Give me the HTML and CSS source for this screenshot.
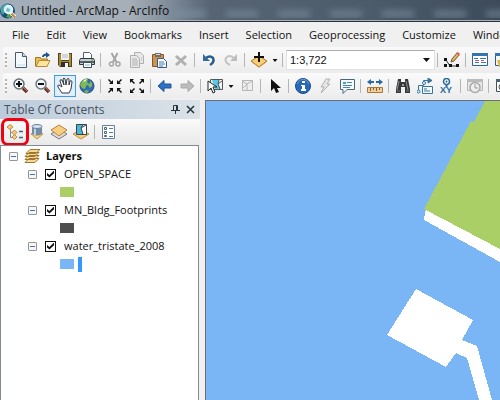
FILE: index.html
```html
<!DOCTYPE html>
<html lang="en">
<head>
<meta charset="utf-8">
<title>Untitled - ArcMap - ArcInfo</title>
<link rel="stylesheet" href="styles.css">
</head>
<body>
<div class="app">
  <header class="titlebar">
    <svg class="icon" viewBox="0 0 16 16"><circle cx="7.500" cy="8" r="7.500" fill="#174d78"/><path d="M1 5Q4 0 9 1L5 4 6 7 3 12Q0 9 1 5z" fill="#4ba5a8"/><path d="M9 9l4 1-3 5-4-1z" fill="#52a350"/><circle cx="8.500" cy="6.500" r="4" fill="#c9edf8" stroke="#eff8fa" stroke-width="1.500"/><path d="M7 5l3 1-1 3-3-1z" fill="#68b9c9"/><path d="M11 10l4 4" stroke="#fff" stroke-width="3.500"/><path d="M11.500 10.500l3.500 4" stroke="#c78639" stroke-width="2"/></svg>
    <h1 class="title">Untitled - ArcMap - ArcInfo</h1>
    <div class="glass" aria-hidden="true"><i></i><i></i><i></i><i></i><i></i><i></i><i></i><i></i></div>
  </header>
  <nav class="menubar">
    <button>File</button><button>Edit</button><button>View</button><button>Bookmarks</button><button>Insert</button><button>Selection</button><button>Geoprocessing</button><button>Customize</button><button>Windows</button>
  </nav>

  <div class="toolbar" role="toolbar" aria-label="Standard">
    <span class="grip"></span>
    <button class="tool" aria-label="New"><svg class="icon" viewBox="0 0 16 16"><path d="M2.500.5h7l4 4v11h-11z" fill="#f4f9fd" stroke="#465b70"/><path d="M9.500.5v4h4" fill="#cbdcec" stroke="#465b70"/><path d="M4 12h8v2H4z" fill="#dce9f5"/></svg></button>
    <button class="tool" aria-label="Open"><svg class="icon" viewBox="0 0 16 16"><path d="M.5 14V5.500h5l1 1.500h6v7z" fill="#e9bd55" stroke="#a3772b"/><path d="M1 14.500L4 8.500h11l-3 6z" fill="#ffe49b" stroke="#b48a37"/><path d="M8 5Q8 2.500 12 2.500" fill="none" stroke="#1f5688" stroke-width="2"/><path d="M11 0l4 3-4 3z" fill="#1f5688"/></svg></button>
    <button class="tool" aria-label="Save"><svg class="icon" viewBox="0 0 16 16"><path d="M1 1h14v14H3l-2-2z" fill="#51451f"/><path d="M2 2h2v7h8V2h2v12H2z" fill="#a98b3c"/><path d="M4 1h8v7H4z" fill="#edf1f4"/><path d="M5 3h6M5 5h6" stroke="#b7bcc1"/><path d="M4 10h8v5H4z" fill="#30302c"/><path d="M8 11h3v4H8z" fill="#f4f4f0"/></svg></button>
    <button class="tool" aria-label="Print"><svg class="icon" viewBox="0 0 16 16"><path d="M4.500 6V.5h6l2 2V6" fill="#fff" stroke="#4d6478"/><path d="M1.500 6.500h13l1 2v4H.500v-4z" fill="#c7cbce" stroke="#303840"/><path d="M1 9h14v2H1z" fill="#52606a"/><path d="M12 7h2v2h-2z" fill="#7dc949"/><path d="M4.500 10.500h8v5h-8z" fill="#fff" stroke="#394d5f"/><path d="M6 13h5" stroke="#8ba8bf"/></svg></button>
    <span class="sep"></span>
    <button class="tool" aria-label="Cut"><svg class="icon" viewBox="0 0 16 16" fill="none" stroke="#a6a6a6" stroke-width="2"><path d="M4.500 1l5 9M10.500 1L6 10"/><circle cx="4.500" cy="12" r="2" stroke-width="1.500"/><circle cx="11" cy="12" r="2" stroke-width="1.500"/></svg></button>
    <button class="tool" aria-label="Copy"><svg class="icon" viewBox="0 0 16 16" fill="#e9e9e9" stroke="#b0b0b0"><path d="M5.500.5h6l3 3v8h-9z"/><path d="M1.500 3.500h6l3 3v9h-9z"/><path d="M3 7h5M3 9h6M3 11h6M3 13h6M12 6h1M12 8h1"/></svg></button>
    <button class="tool" aria-label="Paste"><svg class="icon" viewBox="0 0 16 16"><path d="M1.500 2.500h11v12h-11z" fill="#ce9350" stroke="#885526"/><path d="M4 1h6v4H4z" fill="#6e6e6e"/><path d="M5 2h4v1H5z" fill="#ddd"/><path d="M6.500 6.500h6l3 3v6h-9z" fill="#f6faff" stroke="#335d89"/><path d="M8 10h5M8 12h6M8 14h4" stroke="#507ba6"/></svg></button>
    <button class="tool" aria-label="Delete"><svg class="icon" viewBox="0 0 16 16"><path d="M3 4l10 9M13 4L3 13" stroke="#b0b0b0" stroke-width="3"/></svg></button>
    <span class="sep"></span>
    <button class="tool" aria-label="Undo"><svg class="icon" viewBox="0 0 16 16"><path d="M5 6Q9 3 12 6 14 10 9 13" fill="none" stroke="#285c8c" stroke-width="2.500"/><path d="M2 2v7h7z" fill="#326c9e"/></svg></button>
    <button class="tool" aria-label="Redo"><svg class="icon" viewBox="0 0 16 16"><path d="M11 6Q6 2 3 6 1 10 7 13" fill="none" stroke="#c4c4c4" stroke-width="2"/><path d="M14 2v7H7z" fill="#bdbdbd"/></svg></button>
    <span class="sep"></span>
    <button class="tool" aria-label="Add Data"><svg class="icon" viewBox="0 0 16 16"><path d="M0 9l8-5 8 5-8 6z" fill="#f7cd78" stroke="#af792b"/><path d="M1 10l7 5 7-5" fill="none" stroke="#c98e36"/><path d="M8 0v10M3 5h10" stroke="#111" stroke-width="2"/></svg></button>
    <button class="drop" aria-label="Add Data options"></button>
    <span class="sep"></span>
    <div class="scale"><select aria-label="Map scale"><option>1:3,722</option></select></div>
    <span class="sep"></span>
    <button class="tool" aria-label="Editor"><svg class="icon" viewBox="0 0 16 16"><path d="M2 8l4 6h8" fill="none" stroke="#333"/><path d="M0 6h3v3H0zM0 12h3v3H0zM5 12h3v3H5zM12 12h3v3h-3z" fill="#111"/><path d="M7 10l1-3 5-6 2 2-5 6z" fill="#edb75d" stroke="#6b563a"/><path d="M12 1l2-1 2 2-1 2z" fill="#dd6155"/></svg></button>
    <span class="sep"></span>
    <button class="tool" aria-label="Table Of Contents window"><svg class="icon" viewBox="0 0 16 16"><path d="M.5 1.500h15v12H.5z" fill="#fff" stroke="#2b6599"/><path d="M0 1h16v3H0z" fill="#3475ae"/><path d="M2 6.500h4M8 6.500h6M3 10.500h4M9 10.500h5" stroke="#3376b3"/><path d="M3 8.500h4M9 8.500h3" stroke="#d35151"/></svg></button>
    <button class="tool" aria-label="Catalog window"><svg class="icon" viewBox="0 0 16 16"><path d="M1.500 1.500h14v12h-14z" fill="#f3f7fa" stroke="#285d8c"/><path d="M1 1h15v3H1z" fill="#3475ae"/><path d="M3 8h12v7H5z" fill="#dfb842"/></svg></button>
  </div>

  <div class="toolbar" role="toolbar" aria-label="Tools">
    <span class="grip"></span>
    <button class="tool" aria-label="Zoom In"><svg class="icon" viewBox="0 0 16 16"><path d="M10 10l4 4" stroke="#6b3529" stroke-width="3.500"/><path d="M11 10l4 4" stroke="#b87962"/><circle cx="6" cy="6" r="5" fill="#f1f5f8" stroke="#64707a" stroke-width="1.500"/><path d="M6 3v6M3 6h6" stroke="#111" stroke-width="2"/></svg></button>
    <button class="tool" aria-label="Zoom Out"><svg class="icon" viewBox="0 0 16 16"><path d="M10 10l4 4" stroke="#6b3529" stroke-width="3.500"/><path d="M11 10l4 4" stroke="#b87962"/><circle cx="6" cy="6" r="5" fill="#f1f5f8" stroke="#707b84" stroke-width="1.500"/><path d="M3 6h6" stroke="#111" stroke-width="2"/></svg></button>
    <button class="tool active" aria-label="Pan" aria-pressed="true"><svg class="icon" viewBox="0 0 16 16"><path d="M5 15L1 9q-1-2 1-2l3 2-2-6q0-2 2-1l2 5-1-6q1-2 2 0l1 6 1-6q2-1 2 0v6l1-4q2-1 2 1l-1 7-2 4z" fill="#fff" stroke="#353b42"/></svg></button>
    <button class="tool" aria-label="Full Extent"><svg class="icon" viewBox="0 0 16 16"><circle cx="8" cy="8" r="7" fill="#2f6fb1" stroke="#244f7a"/><path d="M3 3q3-3 6-2L8 4l2 2-3 2-1 3-3-1-2-3zM11 3l2 2v3l-2 2-2-3 2-2zM7 12l3 1-2 2-3-1z" fill="#82b957"/><path d="M4 3q2-2 4-2L6 4z" fill="#d9f0c2"/></svg></button>
    <span class="sep"></span>
    <button class="tool" aria-label="Fixed Zoom In"><svg class="icon" viewBox="0 0 16 16" fill="#111"><path d="M6 2v4H2l1.500-1.500L1 2l1-1 2.500 2.500zM10 2v4h4l-1.500-1.500L15 2l-1-1-2.500 2.500zM6 14v-4H2l1.500 1.500L1 14l1 1 2.500-2.500zM10 14v-4h4l-1.500 1.500L15 14l-1 1-2.500-2.500z"/></svg></button>
    <button class="tool" aria-label="Fixed Zoom Out"><svg class="icon" viewBox="0 0 16 16" fill="#111"><path d="M1 5V1h4L3.500 2.500 6 5 5 6 2.500 3.500zM15 5V1h-4l1.500 1.500L10 5l1 1 2.500-2.500zM1 11v4h4l-1.500-1.500L6 11l-1-1-2.500 2.500zM15 11v4h-4l1.500-1.500L10 11l1-1 2.500 2.500z"/></svg></button>
    <span class="sep"></span>
    <button class="tool" aria-label="Previous Extent"><svg class="icon" viewBox="0 0 16 16"><path d="M1 8l6-5.500V6h7v4H7v3.500z" fill="#2d72c7" stroke="#225494"/></svg></button>
    <button class="tool" aria-label="Next Extent"><svg class="icon" viewBox="0 0 16 16"><path d="M15 8L9 2.500V6H2v4h7v3.500z" fill="#bcbcbc" stroke="#aaa"/></svg></button>
    <span class="sep"></span>
    <button class="tool" aria-label="Select Features"><svg class="icon" viewBox="0 0 16 16"><path d="M3.500 1.500h12v10h-12z" fill="#f5f5f5" stroke="#555"/><path d="M5 2h7l-1 4 2 5H8z" fill="#54cce7"/><path d="M12 2l-1 4 4-3M11 6l2 5" fill="none" stroke="#555"/><path d="M1 3v10l3-3 2 5 2-1-2-5h4z" fill="#fff" stroke="#222"/></svg></button>
    <button class="drop" aria-label="Selection options"></button>
    <button class="tool" aria-label="Clear Selection"><svg class="icon" viewBox="0 0 16 16" fill="none" stroke="#b5b5b5"><path d="M3.500 2.500h10v10h-10z" fill="#eee"/><path d="M3 3l5 3 5-3M8 6v6M4 10l4-4"/></svg></button>
    <span class="sep"></span>
    <button class="tool" aria-label="Select Elements"><svg class="icon" viewBox="0 0 16 16"><path d="M4 1v12l3-3 2 5 3-1-2-4h4z" fill="#111"/></svg></button>
    <span class="sep"></span>
    <button class="tool" aria-label="Identify"><svg class="icon" viewBox="0 0 16 16"><circle cx="8" cy="8" r="7.500" fill="#2868b7" stroke="#18488a"/><path d="M2 6q2-5 6-5t6 5" fill="none" stroke="#6399d3"/><path d="M7 3h3v2H7zM6 7h4v4h1v2H6v-2h1V8H6z" fill="#fff"/></svg></button>
    <button class="tool" aria-label="Hyperlink"><svg class="icon" viewBox="0 0 16 16"><path d="M9 1h4L10 6h3l-9 9 3-6H4z" fill="#e5e5e5" stroke="#b1b1b1"/></svg></button>
    <button class="tool" aria-label="HTML Popup"><svg class="icon" viewBox="0 0 16 16"><path d="M1.500 1.500h14v10H8l-4 4v-4H1.500z" fill="#f4faff" stroke="#48677b"/><path d="M4 4h3v2H4z" fill="#4d99bf"/><path d="M8 4.500h5M4 7.500h9M4 9.500h7" stroke="#4787ad"/></svg></button>
    <span class="sep"></span>
    <button class="tool" aria-label="Measure"><svg class="icon" viewBox="0 0 16 16"><path d="M0 4l4-3v2h3v2H4v2zM16 4l-4-3v2H9v2h3v2z" fill="#286ba8"/><path d="M.5 9.500h15v5H.5z" fill="#efd098" stroke="#aa7540"/><path d="M3.500 10v3M6.500 10v2M9.500 10v3M12.500 10v2" stroke="#8c5a2b"/></svg></button>
    <span class="sep"></span>
    <button class="tool" aria-label="Find"><svg class="icon" viewBox="0 0 16 16"><path d="M3 1h3v3h4V1h3l2 10v4h-5V9H6v6H1v-4z" fill="#34383a"/><path d="M4 3L2 12M11 3l2 9" stroke="#8e9495"/><path d="M7 6h2v2H7z" fill="#999"/><path d="M2 13h3M11 13h3" stroke="#777"/></svg></button>
    <button class="tool" aria-label="Find Route"><svg class="icon" viewBox="0 0 16 16" fill="none" stroke="#35759e"><path d="M1.500 12V7.500h5v-5H12"/><path d="M11 0l4 2.500L11 5z" fill="#35759e"/><circle cx="1.500" cy="13.500" r="1.500" fill="#d3eaf5"/><circle cx="7" cy="5" r="1.500" fill="#fff"/><path d="M5.500 8.500h10v7h-10z" fill="#f5faff"/><path d="M7 11h3M7 13h6"/></svg></button>
    <button class="tool" aria-label="Go To XY"><svg class="icon" viewBox="0 0 16 16"><circle cx="7.500" cy="3.500" r="3" fill="#fff" stroke="#286a9f" stroke-width="1.500"/><path d="M7 3h1v1H7zM7 7h1v2H7z" fill="#286a9f" stroke="#286a9f"/><text class="xy" x="1" y="15">XY</text></svg></button>
    <span class="sep"></span>
    <button class="tool" aria-label="Time Slider"><svg class="icon" viewBox="0 0 16 16"><path d="M.5 1.500h15v11H.5z" fill="#e7e7e7" stroke="#b7b7b7"/><path d="M0 1h16v3H0z" fill="#bbb"/><circle cx="8" cy="9.500" r="5" fill="#eee" stroke="#aaa" stroke-width="1.500"/><path d="M8 6v4h3" fill="none" stroke="#999"/></svg></button>
    <span class="sep"></span>
    <button class="tool" aria-label="Viewer Window"><svg class="icon" viewBox="0 0 16 16"><path d="M1.500 1.500h14v12h-14z" fill="#fff" stroke="#444f58"/><path d="M1 1h15v3H1z" fill="#4f6170"/><circle cx="7" cy="9" r="3" fill="#ddd" stroke="#555"/></svg></button>
  </div>

  <main class="workspace">
    <aside class="toc">
      <div class="toc-head">
        <h2>Table Of Contents</h2>
        <button class="mini" aria-label="Auto hide"><svg viewBox="0 0 9 9" fill="none" stroke="#26323e"><path d="M2.500 5V.5h4V5M5.500 1v4M0 5.500h9M4.500 6v3"/></svg></button>
        <button class="mini" aria-label="Close"><svg viewBox="0 0 9 9"><path d="M1 1l7 7M8 1L1 8" stroke="#26323e" stroke-width="1.500"/></svg></button>
      </div>
      <div class="toc-tools">
        <button class="tool marked" aria-label="List By Drawing Order"><svg class="icon" viewBox="0 0 16 16"><path d="M3.500 5v8.500H6M3.500 8.500H6" fill="none" stroke="#888"/><g fill="#f2cc84" stroke="#c19042"><path d="M0 3l3-2.500L6 3 3 5.500zM5 8.500L7.500 6 10 8.500 7.500 11zM5 13l2.500-2.500L10 13l-2.500 2.500z"/></g><path d="M12 7.500h4M12 13.500h4" stroke="#336a91" stroke-width="1.500"/></svg></button>
        <button class="tool" aria-label="List By Source"><svg class="icon" viewBox="0 0 16 16"><path d="M2 10l6-3 6 3-6 5z" fill="#f5cf80" stroke="#ca963e"/><path d="M3 2v8q5 3 10 0V2z" fill="#738ba5"/><path d="M5 3v8h2V3z" fill="#c5d2df"/><ellipse cx="8" cy="2.500" rx="5" ry="2" fill="#dae4ed" stroke="#667f98"/></svg></button>
        <button class="tool" aria-label="List By Visibility"><svg class="icon" viewBox="0 0 16 16"><path d="M0 10l8-5 8 5-8 5z" fill="#dedede" stroke="#777"/><path d="M0 6l8-5 8 5-8 6z" fill="#f8cf80" stroke="#b58235"/></svg></button>
        <button class="tool" aria-label="List By Selection"><svg class="icon" viewBox="0 0 16 16"><path d="M0 10l8-4 8 4-8 5z" fill="#f5cc7b" stroke="#bf8d3e"/><path d="M3.500.5h10v10h-10z" fill="#f9fbfc" stroke="#34454f"/><path d="M4 1h6L8 4l2 6H4z" fill="#48b7d5"/><path d="M10 1L8 4l2 6M8 4l5-3" fill="none" stroke="#34454f"/></svg></button>
        <span class="sep"></span>
        <button class="tool" aria-label="Options"><svg class="icon" viewBox="0 0 16 16"><path d="M1.500 1.500h12v13h-12z" fill="#fff" stroke="#6681a0"/><path d="M3.500 3.500h2v2h-2zM3.500 7.500h2v2h-2zM3.500 11.500h2v1h-2z" fill="#fff" stroke="#4d6377"/><path d="M8 4.500h4M8 8.500h4M8 12.500h4" stroke="#527fac"/></svg></button>
      </div>
      <ul class="tree">
        <li>
          <div class="row root"><button class="toggle" aria-label="Collapse Layers"></button><svg class="icon" viewBox="0 0 16 16" fill="#f7d991" stroke="#9f7632"><path d="M1 14.500l4-4h10l-4 4zM1 11.500l4-4h10l-4 4zM1 8.500l4-4h10l-4 4zM2 5.500l4-4h10l-4 4z"/></svg><span>Layers</span></div>
          <ul>
            <li><div class="row"><button class="toggle" aria-label="Collapse OPEN_SPACE"></button><input type="checkbox" id="open" checked><label for="open">OPEN_SPACE</label></div><div class="row key"><span class="swatch park"></span></div></li>
            <li><div class="row"><button class="toggle" aria-label="Collapse MN_Bldg_Footprints"></button><input type="checkbox" id="bldg" checked><label for="bldg">MN_Bldg_Footprints</label></div><div class="row key"><span class="swatch building"></span></div></li>
            <li><div class="row"><button class="toggle" aria-label="Collapse water_tristate_2008"></button><input type="checkbox" id="water" checked><label for="water">water_tristate_2008</label></div><div class="row key"><span class="swatch water"></span><span class="caret"></span></div></li>
          </ul>
        </li>
      </ul>
    </aside>
    <section class="map" aria-label="Map">
      <svg viewBox="0 0 294 299" preserveAspectRatio="xMinYMin slice" shape-rendering="crispEdges"><path fill="#fff" d="M220 109l-1 3-1 7 76 42v-14zM210 188l57 31-11 20 15 6 15 54h-13l-12-42-11-5-10 14-59-32z"/><path fill="#a9cf66" d="M279 0l-11 21-3-1-47 88 76 40V0z"/></svg>
    </section>
  </main>
</div>
</body>
</html>
```
FILE: styles.css
```css
* { box-sizing: border-box; }
body {
  margin: 0;
  font: 12px/18px "Open Sans", "Noto Sans", sans-serif;
  color: #111;
}
button { padding: 0; border: 0; background: none; font: inherit; color: inherit; }
h1, h2 { margin: 0; font: inherit; }
ul { margin: 0; padding: 0; list-style: none; }

.app {
  display: flex;
  flex-direction: column;
  height: 100vh;
  overflow: hidden;
  background: #f0f0f0;
}
.icon { display: block; flex: none; width: 16px; height: 16px; }

.titlebar {
  display: flex;
  flex: none;
  align-items: center;
  height: 22px;
  gap: 5px;
  background: linear-gradient(90deg, #a1adb9, #a6afb8 26%, #7e8b98 34%, #566473 42%, #4c5b6a 75%, #3d4b59);
  border-bottom: 1px solid #29323d;
  box-shadow: inset 0 -1px #a7b0ba;
}
.title { white-space: nowrap; }
.glass { display: flex; flex: 1; gap: 20px; overflow: hidden; }
.glass i { flex: none; width: 32px; height: 8px; margin-top: 6px; background: #8295a8; opacity: .5; filter: blur(3px); }

.menubar {
  display: flex;
  flex: none;
  align-items: center;
  height: 25px;
  gap: 17px;
  padding-left: 12px;
  overflow: hidden;
  font-size: 11px;
  background: #f0f0f0;
}

.toolbar {
  display: flex;
  flex: none;
  align-items: center;
  height: 26px;
  margin-left: 3px;
  overflow: hidden;
  background: linear-gradient(#fafafa, #ececec);
  border-radius: 3px 0 0 3px;
}
.grip { flex: none; width: 2px; height: 15px; margin: 0 3px 0 2px; background: repeating-linear-gradient(#b3b3b3 0 2px, #f8f8f8 2px 4px); }
.tool { display: grid; flex: none; place-items: center; width: 22px; height: 22px; }
.active { background: #e1effb; border: 1px solid #3c9bf5; }
.sep { flex: none; width: 1px; height: 14px; margin: 0 3px 0 2px; background: #b5b5b5; }
.drop { flex: none; width: 10px; height: 20px; }
.drop::before { content: ""; display: block; margin: 1px auto 0; width: 5px; height: 3px; background: #111; clip-path: polygon(0 0, 100% 0, 50% 100%); }
.xy { font: bold 9px "Liberation Sans", sans-serif; fill: #286a9f; }

.scale { display: flex; flex: none; align-items: center; width: 149px; height: 20px; background: #fff; border: 1px solid #e2e2e2; border-top-color: #abadb3; }
.scale select { flex: 1; height: 18px; padding: 0 3px; border: 0; background: none; font: 11px "Liberation Sans", sans-serif; color: #111; appearance: none; }
.scale::after { content: ""; width: 7px; height: 4px; margin-right: 4px; background: #111; clip-path: polygon(0 0, 100% 0, 50% 100%); }

.workspace { display: flex; flex: 1; min-height: 0; gap: 5px; padding-top: 1px; }
.toc { display: flex; flex: none; flex-direction: column; width: 200px; }
.toc-head {
  display: flex;
  align-items: center;
  height: 19px;
  gap: 6px;
  padding: 0 5px 0 4px;
  color: #44515e;
  background: linear-gradient(90deg, #bccbdb, #dbe2e8);
}
.toc-head h2 { flex: 1; }
.mini { width: 9px; height: 9px; }
.mini svg { display: block; width: 9px; height: 9px; }
.toc-tools { display: flex; align-items: center; height: 26px; padding-left: 4px; background: linear-gradient(#fafafa, #e9e9e9); }
.marked { outline: 3px solid #f00010; border-radius: 4px; }

.tree { flex: 1; margin-right: 1px; padding: 1px 0 0 8px; font-size: 11px; background: #fff; border: 1px solid #818b96; border-bottom: 0; }
.tree ul { padding-left: 19px; }
.row { display: flex; align-items: center; height: 18px; }
.root { gap: 6px; font-weight: bold; }
.toggle {
  flex: none;
  width: 9px;
  height: 9px;
  border: 1px solid #969696;
  border-radius: 1px;
  background: linear-gradient(#426fb5, #426fb5) center / 5px 1px no-repeat #f7f7f7;
}
.row input { display: grid; flex: none; place-items: center; width: 11px; height: 11px; margin: 0 8px; appearance: none; background: #fff; border: 1px solid #111; }
.row input:checked::before { content: ""; width: 7px; height: 7px; background: #111; clip-path: polygon(0 35%, 35% 65%, 100% 0, 100% 40%, 35% 100%, 0 70%); }
.key { gap: 4px; padding-left: 32px; }
.swatch { width: 14px; height: 10px; }
.park { background: #a9cf66; }
.building { background: #4e4e4e; }
.water { background: #7ab5f5; }
.caret { width: 4px; height: 15px; background: #3399ff; }

.map { flex: 1; min-width: 0; overflow: hidden; background: #7ab5f5; border: solid #6b6f73; border-width: 1px 0 0 1px; }
.map svg { display: block; width: 100%; height: 100%; }
```
